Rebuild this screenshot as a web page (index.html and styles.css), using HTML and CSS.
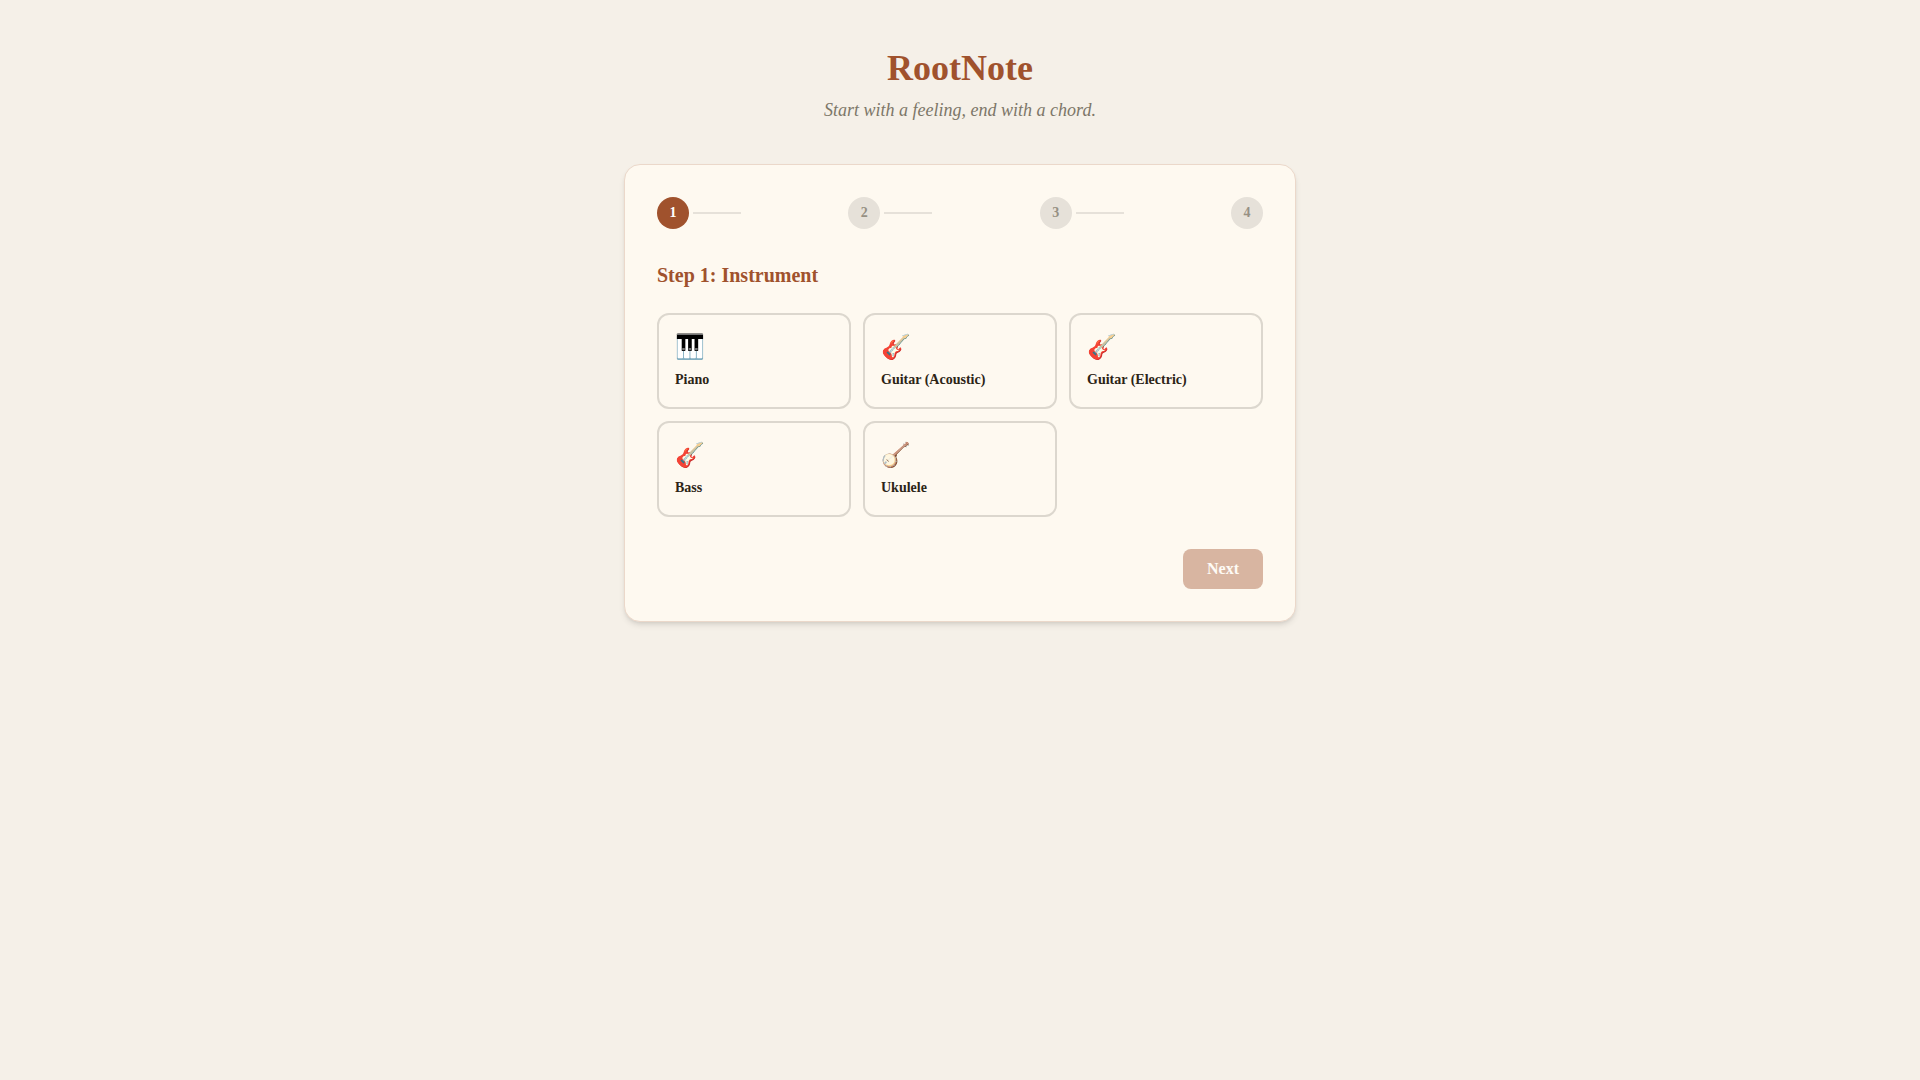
FILE: index.html
```html
<!DOCTYPE html>
<html lang="en">
<head>
<meta charset="utf-8">
<meta name="viewport" content="width=device-width, initial-scale=1">
<title>RootNote</title>
<link rel="stylesheet" href="styles.css">
</head>
<body>
<div class="app">
  <header class="header">
    <h1 class="title">RootNote</h1>
    <p class="tagline">Start with a feeling, end with a chord.</p>
  </header>
  <main class="card">
    <ol class="steps">
      <li class="step"><span class="dot dot-active">1</span><span class="line"></span></li>
      <li class="step"><span class="dot">2</span><span class="line"></span></li>
      <li class="step"><span class="dot">3</span><span class="line"></span></li>
      <li class="step"><span class="dot">4</span></li>
    </ol>
    <h2 class="heading">Step 1: Instrument</h2>
    <div class="options">
      <button type="button" class="option"><span class="emoji">🎹</span><span class="label">Piano</span></button>
      <button type="button" class="option"><span class="emoji">🎸</span><span class="label">Guitar (Acoustic)</span></button>
      <button type="button" class="option"><span class="emoji">🎸</span><span class="label">Guitar (Electric)</span></button>
      <button type="button" class="option"><span class="emoji">🎸</span><span class="label">Bass</span></button>
      <button type="button" class="option"><span class="emoji">🪕</span><span class="label">Ukulele</span></button>
    </div>
    <div class="actions"><button type="button" class="next" disabled>Next</button></div>
  </main>
</div>
</body>
</html>
```
FILE: styles.css
```css
* { box-sizing: border-box; }
body {
  margin: 0;
  min-height: 100vh;
  background: #f5f0e8;
  color: #2c2416;
  font-family: "Liberation Serif", serif;
  font-size: 16px;
  line-height: 24px;
}
button { font: inherit; color: inherit; }
.app { max-width: 720px; margin: 0 auto; padding: 40px 24px; }
.header { text-align: center; margin-bottom: 40px; }
.title { margin: 0; font-size: 36px; line-height: 56px; font-weight: 700; color: #a0522d; }
.tagline { margin: 0; font-size: 18px; line-height: 28px; font-style: italic; color: #7d7768; }
.card {
  padding: 32px;
  background: #fef9f0;
  border: 1px solid #ebd8ca;
  border-radius: 16px;
  box-shadow: 0 4px 6px -1px rgba(0, 0, 0, 0.1), 0 2px 4px -2px rgba(0, 0, 0, 0.1);
}
.steps { display: flex; justify-content: space-between; list-style: none; margin: 0 0 32px; padding: 0; }
.step { display: flex; align-items: center; gap: 4px; }
.dot {
  display: grid;
  place-items: center;
  width: 32px;
  height: 32px;
  border-radius: 50%;
  background: #e6e1d9;
  color: #969083;
  font-size: 14px;
  line-height: 20px;
  font-weight: 700;
}
.dot-active { background: #a0522d; color: #fff; }
.line { width: 48px; height: 2px; background: #e6e1d9; }
.heading { margin: 0 0 24px; font-size: 20px; line-height: 28px; color: #a0522d; }
.options { display: grid; grid-template-columns: repeat(auto-fill, minmax(180px, 1fr)); gap: 12px; }
.option {
  display: flex;
  flex-direction: column;
  align-items: flex-start;
  gap: 6px;
  padding: 16px;
  background: transparent;
  border: 2px solid #dcd7ce;
  border-radius: 12px;
  text-align: left;
}
.emoji { font-size: 24px; line-height: 32px; }
.label { font-size: 14px; line-height: 22px; font-weight: 700; }
.actions { display: flex; justify-content: flex-end; margin-top: 32px; }
.next {
  padding: 8px 24px;
  border: 0;
  border-radius: 8px;
  background: #a0522d;
  color: #fff;
  font-weight: 700;
  opacity: 0.4;
}
```
